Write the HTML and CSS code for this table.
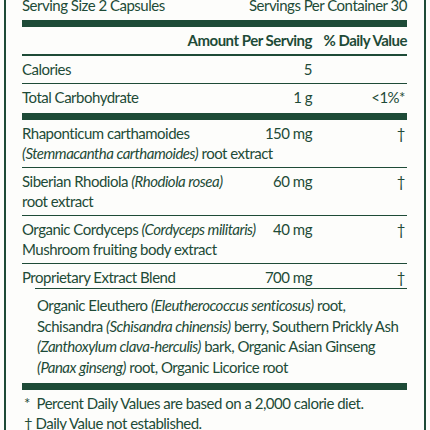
FILE: index.html
```
<!DOCTYPE html>
<html lang="en">
<head>
  <meta charset="UTF-8" />
  <title>Supplement Facts</title>
  <link rel="stylesheet" href="styles.css">
</head>
<body>
  <div class="panel">
    <div class="serving">
      <span>Serving Size 2 Capsules</span>
      <span>Servings Per Container 30</span>
    </div>
    <div class="bar"></div>

    <div class="row head">
      <span class="name"></span>
      <span class="amt">Amount Per Serving</span>
      <span class="dv">% Daily Value</span>
    </div>

    <div class="row">
      <span class="name">Calories</span>
      <span class="amt">5</span>
      <span class="dv"></span>
    </div>
    <div class="row last">
      <span class="name">Total Carbohydrate</span>
      <span class="amt">1 g</span>
      <span class="dv">&lt;1%*</span>
    </div>
    <div class="bar"></div>

    <div class="row">
      <span class="name">Rhaponticum carthamoides<br><i>(Stemmacantha carthamoides)</i> root extract</span>
      <span class="amt">150 mg</span>
      <span class="dv">†</span>
    </div>
    <div class="row">
      <span class="name">Siberian Rhodiola <i>(Rhodiola rosea)</i><br>root extract</span>
      <span class="amt">60 mg</span>
      <span class="dv">†</span>
    </div>
    <div class="row">
      <span class="name">Organic Cordyceps <i>(Cordyceps militaris)</i><br>Mushroom fruiting body extract</span>
      <span class="amt">40 mg</span>
      <span class="dv">†</span>
    </div>
    <div class="row last">
      <span class="name">Proprietary Extract Blend</span>
      <span class="amt">700 mg</span>
      <span class="dv">†</span>
    </div>
    <div class="blend">
      Organic Eleuthero <i>(Eleutherococcus senticosus)</i> root,<br>
      Schisandra <i>(Schisandra chinensis)</i> berry, Southern Prickly Ash<br>
      <i>(Zanthoxylum clava-herculis)</i> bark, Organic Asian Ginseng<br>
      <i>(Panax ginseng)</i> root, Organic Licorice root
    </div>
    <div class="bar"></div>

    <div class="notes">
      <div>*&nbsp; Percent Daily Values are based on a 2,000 calorie diet.</div>
      <div>† Daily Value not established.</div>
    </div>
  </div>
</body>
</html>
```
FILE: styles.css
```
body {
  margin: 0;
  background: #fdfdfb;
  overflow: hidden;
  font-family: "Lato", "Liberation Sans", sans-serif;
  font-size: 15px;
  letter-spacing: -0.5px;
  line-height: 20px;
  color: #1e4b37;
}

.panel {
  margin: -5px 4px 0 4px;
  border-left: 2px solid #1e4b37;
  border-right: 2px solid #1e4b37;
  padding: 0 17px 0 16px;
  height: 460px;
}

.serving {
  display: flex;
  justify-content: space-between;
}

.bar {
  height: 7px;
  background: #1e4b37;
  margin-top: 5px;
}

.row {
  display: grid;
  grid-template-columns: minmax(0, 1fr) 50px 95px;
  padding: 3px 0 4px;
  border-bottom: 1px solid #1e4b37;
}

.name {
  white-space: nowrap;
}

.row.head {
  padding: 3px 0 4px;
  border-bottom-width: 2px;
  font-weight: bold;
}

.row.head .amt {
  white-space: nowrap;
  direction: rtl;
}

.row.last {
  border-bottom: none;
  padding-bottom: 1px;
}

.amt, .dv {
  text-align: right;
}

.dv {
  padding-right: 2px;
}

.head .dv {
  padding-right: 0;
}

i {
  font-style: italic;
}

.blend {
  margin-left: 13px;
  border-top: 1px solid #1e4b37;
  padding: 6px 0 1px 2px;
  line-height: 20.6px;
}

.notes {
  padding-top: 3px;
}

.notes div {
  padding-left: 2px;
}
```
